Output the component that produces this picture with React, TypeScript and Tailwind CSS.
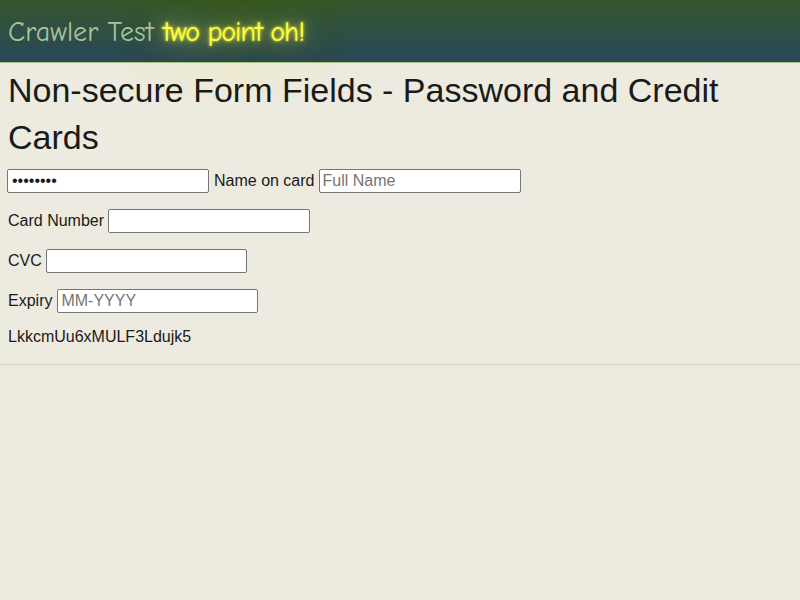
export default function App() {
  return (
    <div className="min-h-[600px] w-[800px] bg-[#edeadf] text-[#1a1a1a]" style={{ fontFamily: '"Liberation Sans", Arial, sans-serif' }}>
      <div className="relative z-10 h-[63px] border-b border-[#a8c08a] bg-gradient-to-b from-[#35562a] to-[#2a4758] px-2 flex items-center">
        <div className="text-[28px] leading-none mt-[1px] whitespace-pre" style={{ fontFamily: '"Comic Sans MS", "Comic Neue", "Noto Sans", sans-serif' }}>
          <span className="text-[#a9c49a]">Crawler Test </span>
          <span className="tracking-[-1px] text-[#ffff3c] [text-shadow:0_0_3px_#ffff40,0_0_10px_rgba(255,255,80,0.7),0_0_30px_rgba(255,255,140,0.7),0_0_60px_rgba(255,255,190,0.6),0_0_90px_rgba(255,255,200,0.5)]">two point oh!</span>
        </div>
      </div>
      <div className="px-2 pb-[18px] border-b border-[#d5d2c4]">
        <h1 className="text-[34px] leading-[47px] mt-[4px] mb-[8px] font-normal">Non-secure Form Fields - Password and Credit Cards</h1>
        <div className="flex flex-col gap-4 text-[16px]">
          <div className="flex items-center h-6">
            <input type="password" defaultValue="password" className="h-6 w-[202px] -ml-[1px] border border-[#767676] rounded-[2px] bg-white px-1 text-[16px]" />
            <span className="ml-[5px] mr-1">Name on card</span>
            <input placeholder="Full Name" className="h-6 w-[202px] border border-[#767676] rounded-[2px] bg-white px-[3px] text-[16px] placeholder:text-[#757575]" />
          </div>
          <div className="flex items-center h-6">
            <span className="mr-1">Card Number</span>
            <input className="h-6 w-[202px] border border-[#767676] rounded-[2px] bg-white px-1 text-[16px]" />
          </div>
          <div className="flex items-center h-6">
            <span className="mr-1">CVC</span>
            <input className="h-6 w-[201px] border border-[#767676] rounded-[2px] bg-white px-1 text-[16px]" />
          </div>
          <div className="flex items-center h-6">
            <span className="mr-[5px]">Expiry</span>
            <input placeholder="MM-YYYY" className="h-6 w-[201px] border border-[#767676] rounded-[2px] bg-white px-[3px] text-[16px] placeholder:text-[#757575]" />
          </div>
          <div className="leading-[18px] -mt-[1px]">LkkcmUu6xMULF3Ldujk5</div>
        </div>
      </div>
    </div>
  );
}
